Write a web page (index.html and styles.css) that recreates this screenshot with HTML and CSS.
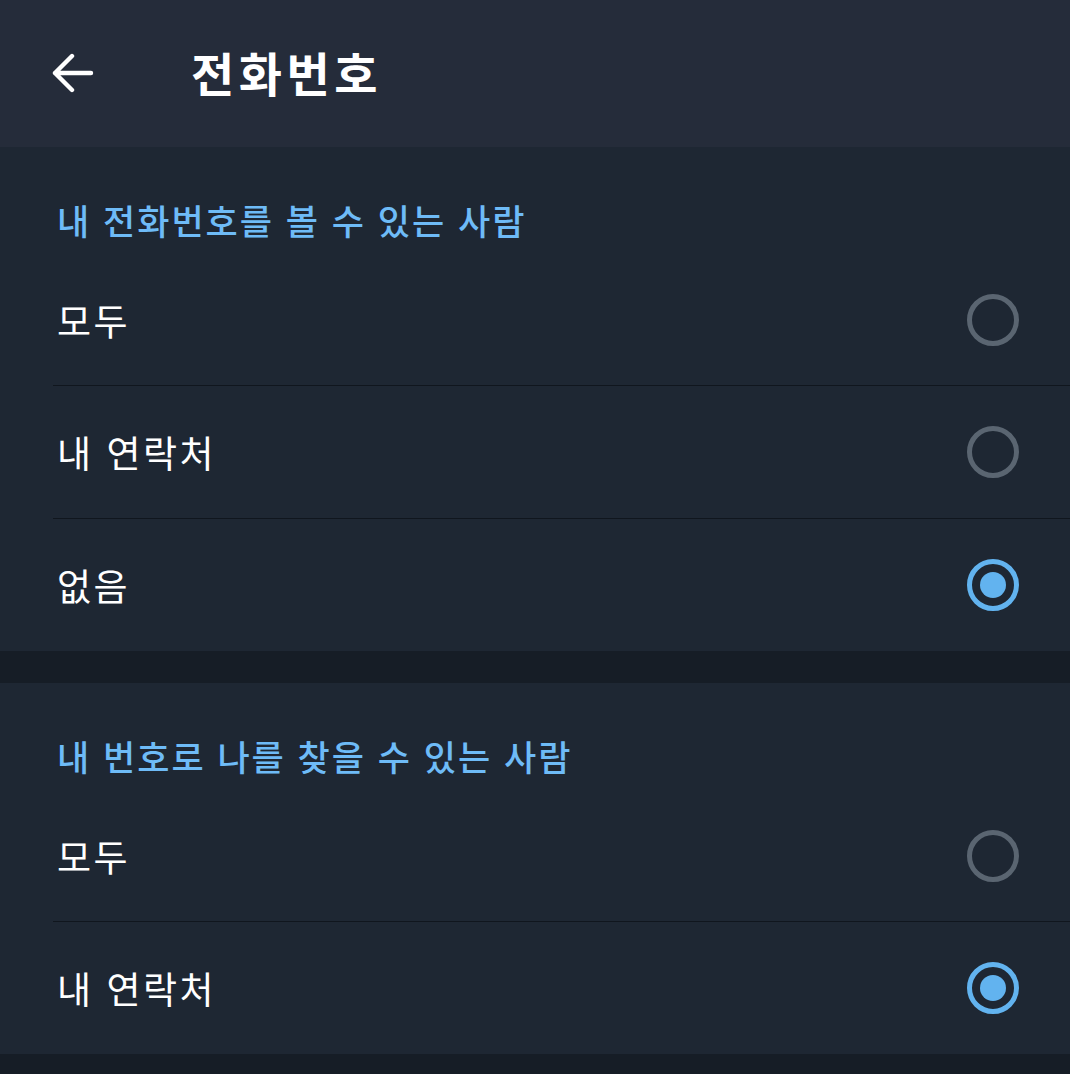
FILE: index.html
```html
<!DOCTYPE html>
<html lang="ko">
    <head>
        <meta charset="utf-8">
        <title>전화번호</title>
        <link rel="stylesheet" href="styles.css">
    </head>
    <body>
        <div class="topbar">
            <svg class="back" width="42" height="40" viewBox="0 0 42 40">
                <path d="M3 20 H39 M3 20 L20 3 M3 20 L20 37" fill="none" stroke="#fff" stroke-width="4.4" stroke-linecap="round" stroke-linejoin="round"/>
            </svg>
            <h1>전화번호</h1>
        </div>

        <div class="group">
            <h2>내 전화번호를 볼 수 있는 사람</h2>
            <div class="row"><span>모두</span><i class="radio"></i></div>
            <div class="row"><span>내 연락처</span><i class="radio"></i></div>
            <div class="row"><span>없음</span><i class="radio on"></i></div>
        </div>

        <div class="group">
            <h2>내 번호로 나를 찾을 수 있는 사람</h2>
            <div class="row"><span>모두</span><i class="radio"></i></div>
            <div class="row"><span>내 연락처</span><i class="radio on"></i></div>
        </div>
    </body>
</html>
```

FILE: styles.css
```css
html, body { margin: 0; padding: 0; }
body {
    background: #161d26;
    font-family: "Noto Sans CJK KR", "Noto Sans", sans-serif;
    color: #fff;
    height: 1074px;
    overflow: hidden;
}
.topbar {
    height: 147px;
    background: #252c3a;
    display: flex;
    align-items: center;
    padding-left: 52px;
}
.topbar .back { flex: none; margin-top: -1px; }
.topbar h1 {
    margin: -5px 0 0 97px;
    font-size: 47px;
    font-weight: 700;
    letter-spacing: 4.5px;
}
.group {
    background: #1e2733;
    margin-bottom: 32px;
    padding-left: 53px;
}
.group h2 {
    margin: 0;
    height: 107px;
    box-sizing: border-box;
    padding: 48px 0 0 4px;
    font-size: 35px;
    font-weight: 500;
    line-height: 50px;
    letter-spacing: 2px;
    color: #6ebbf7;
}
.row {
    height: 132px;
    display: flex;
    align-items: center;
    justify-content: space-between;
    padding: 0 51px 0 4px;
    border-top: 1px solid #10161e;
    font-size: 37px;
    letter-spacing: 2.5px;
}
.group h2 + .row { border-top: none; height: 131px; }
.radio {
    width: 42px;
    height: 42px;
    border: 5px solid #5a6571;
    border-radius: 50%;
    display: flex;
    align-items: center;
    justify-content: center;
}
.radio.on { border-color: #62b3ef; }
.radio.on::after {
    content: "";
    width: 26px;
    height: 26px;
    border-radius: 50%;
    background: #62b3ef;
}
```
